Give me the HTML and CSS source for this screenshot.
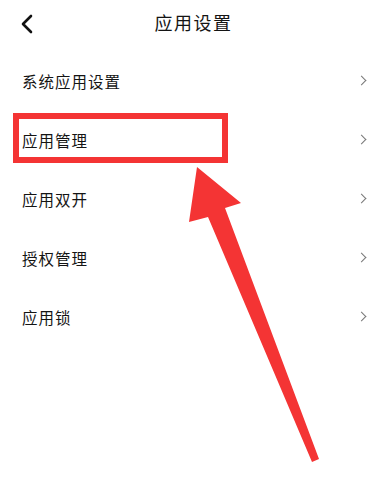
FILE: index.html
```html
<!DOCTYPE html>
<html lang="zh-CN">
<head>
  <meta charset="UTF-8" />
  <meta name="viewport" content="width=device-width, initial-scale=1.0" />
  <title>应用设置</title>
  <link rel="stylesheet" href="styles.css">
</head>
<body>
  <header class="topbar">
    <span class="back">
      <svg width="14" height="20" viewBox="0 0 14 20"><path d="M11 2 L3 10 L11 18" fill="none" stroke="#111" stroke-width="2.6" stroke-linecap="round" stroke-linejoin="round"/></svg>
    </span>
    <h1 class="title">应用设置</h1>
  </header>
  <ul class="menu">
    <li class="row"><span>系统应用设置</span><i class="chev"></i></li>
    <li class="row"><span>应用管理</span><i class="chev"></i></li>
    <li class="row"><span>应用双开</span><i class="chev"></i></li>
    <li class="row"><span>授权管理</span><i class="chev"></i></li>
    <li class="row"><span>应用锁</span><i class="chev"></i></li>
  </ul>

  <!-- annotation over the screenshot -->
  <div class="mark"></div>
  <svg class="arrow" width="387" height="491" viewBox="0 0 387 491">
    <polygon fill="#f43434" points="197,167 241,203 225,208 319,459 312,462 208,217 189,222"/>
  </svg>
</body>
</html>
```

FILE: styles.css
```css
* {
  box-sizing: border-box;
}
body {
  margin: 0;
  background: #fff;
  color: #141414;
  font-family: "Noto Sans CJK SC", "Noto Sans", sans-serif;
  position: relative;
  width: 387px;
  height: 491px;
  overflow: hidden;
}
.topbar {
  height: 44px;
  display: flex;
  align-items: center;
  justify-content: center;
  position: relative;
}
.back {
  position: absolute;
  left: 20px;
  top: 14px;
  display: flex;
}
.title {
  margin: 0;
  font-size: 18px;
  font-weight: 400;
  letter-spacing: 1.5px;
}
.menu {
  list-style: none;
  margin: 7px 0 0;
  padding: 0;
}
.row {
  height: 59px;
  display: flex;
  align-items: center;
  justify-content: space-between;
  padding: 0 20px 0 22px;
  font-size: 15.5px;
  letter-spacing: 1px;
}
.chev {
  width: 7px;
  height: 7px;
  border-top: 1.5px solid #777;
  border-right: 1.5px solid #777;
  transform: rotate(45deg);
  margin-right: 2px;
}
.mark {
  position: absolute;
  left: 13px;
  top: 113px;
  width: 215px;
  height: 50px;
  border: 6px solid #f43434;
}
.arrow {
  position: absolute;
  left: 0;
  top: 0;
}
```
